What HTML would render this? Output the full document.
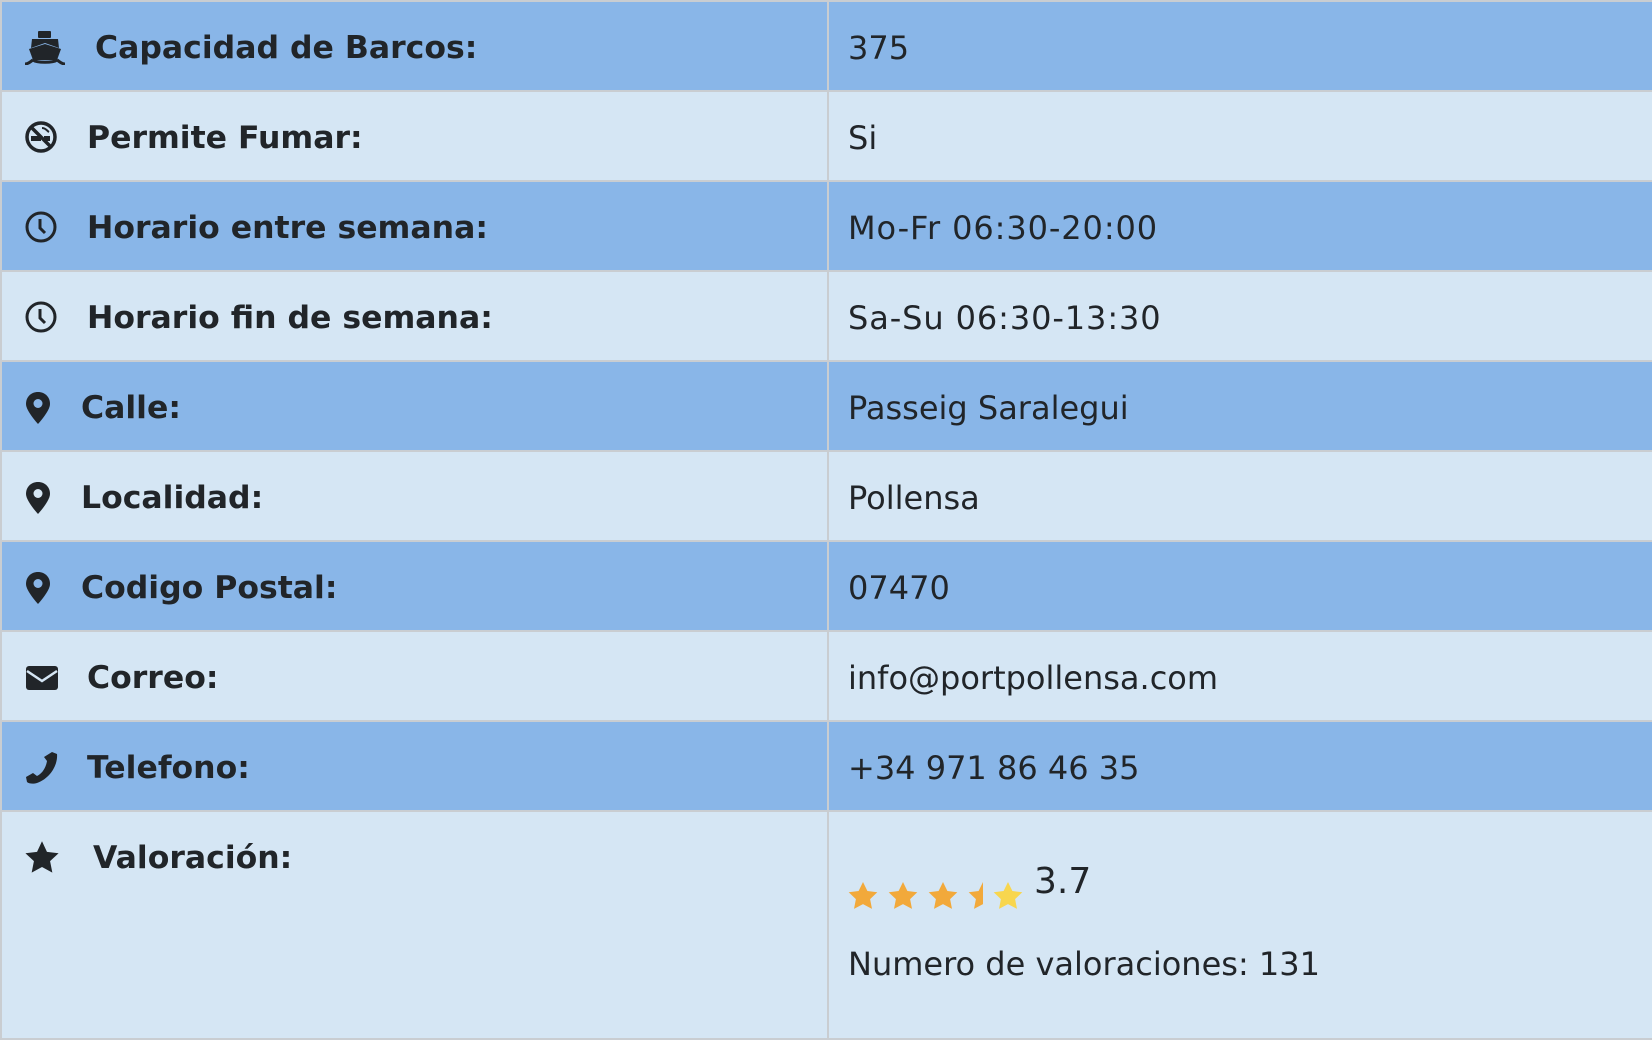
<!DOCTYPE html>
<html><head><meta charset="utf-8"><style>
*{margin:0;padding:0;box-sizing:border-box}
body{width:1652px;height:1044px;background:#fff;position:relative;overflow:hidden;font-family:"DejaVu Sans","Liberation Sans",sans-serif;color:#212529}
.r{position:absolute;left:2px;width:1650px;border-bottom:2px solid #c9cdd1}
.d{background:#89b6e8}.l{background:#d5e6f4}
.v{position:absolute;left:825px;top:0;bottom:0;width:2px;background:#c9cdd1}
.lab{position:absolute;font-weight:bold;font-size:31.5px;line-height:36px;top:28px}
.val{position:absolute;left:846px;font-size:32px;line-height:36px;top:28px}
svg{position:absolute}
</style></head><body>
<div style="position:absolute;left:0;top:0;width:1652px;height:2px;background:#c9cdd1"></div>
<div style="position:absolute;left:0;top:0;width:2px;height:1040px;background:#c9cdd1"></div>
<div style="position:absolute;left:1650px;top:0;width:2px;height:1040px;background:#c9cdd1"></div>

<div class="r d" style="top:2px;height:90px"><div class="v"></div>
<svg style="left:22px;top:29px" width="42" height="34" viewBox="0 0 42 34"><rect x="14" y="0" width="13" height="7" rx="1" fill="#212529"/><path d="M8 8h26l1 9 -14-5 -14 5z" fill="#212529"/><path d="M5 18l16-5 16 5 -4 11h-24z" fill="#212529"/><path d="M1 33c4 0 6-3 8-4M41 33c-4 0-6-3-8-4M9 29c4 3 20 3 24 0" stroke="#212529" stroke-width="3" fill="none"/></svg>
<div class="lab" style="left:93px">Capacidad de Barcos:</div><div class="val">375</div></div>

<div class="r l" style="top:92px;height:90px"><div class="v"></div>
<svg style="left:22px;top:28px" width="34" height="34" viewBox="0 0 34 34"><circle cx="17" cy="17" r="14" stroke="#212529" stroke-width="3.5" fill="none"/><path d="M7 7l20 20" stroke="#212529" stroke-width="3.5"/><rect x="7" y="16" width="10" height="5" fill="#212529"/><rect x="20" y="16" width="6" height="5" fill="#212529"/><path d="M18 8c4 0 5 3 7 4" stroke="#212529" stroke-width="2" fill="none"/></svg>
<div class="lab" style="left:85px">Permite Fumar:</div><div class="val">Si</div></div>

<div class="r d" style="top:182px;height:90px"><div class="v"></div>
<svg style="left:22px;top:28px" width="34" height="34" viewBox="0 0 34 34"><circle cx="17" cy="17" r="14" stroke="#212529" stroke-width="3" fill="none"/><path d="M16 9v9l5 5" stroke="#212529" stroke-width="3" fill="none"/></svg>
<div class="lab" style="left:85px">Horario entre semana:</div><div class="val" style="letter-spacing:0.9px">Mo-Fr 06:30-20:00</div></div>

<div class="r l" style="top:272px;height:90px"><div class="v"></div>
<svg style="left:22px;top:28px" width="34" height="34" viewBox="0 0 34 34"><circle cx="17" cy="17" r="14" stroke="#212529" stroke-width="3" fill="none"/><path d="M16 9v9l5 5" stroke="#212529" stroke-width="3" fill="none"/></svg>
<div class="lab" style="left:85px">Horario fin de semana:</div><div class="val" style="letter-spacing:0.9px">Sa-Su 06:30-13:30</div></div>

<div class="r d" style="top:362px;height:90px"><div class="v"></div>
<svg style="left:24px;top:30px" width="24" height="32" viewBox="0 0 24 32"><path d="M12 0C5 0 0 5 0 12c0 7 12 20 12 20s12-13 12-20C24 5 19 0 12 0z" fill="#212529"/><circle cx="12" cy="11.5" r="4.5" fill="#89b6e8"/></svg>
<div class="lab" style="left:79px">Calle:</div><div class="val">Passeig Saralegui</div></div>

<div class="r l" style="top:452px;height:90px"><div class="v"></div>
<svg style="left:24px;top:30px" width="24" height="32" viewBox="0 0 24 32"><path d="M12 0C5 0 0 5 0 12c0 7 12 20 12 20s12-13 12-20C24 5 19 0 12 0z" fill="#212529"/><circle cx="12" cy="11.5" r="4.5" fill="#d5e6f4"/></svg>
<div class="lab" style="left:79px">Localidad:</div><div class="val">Pollensa</div></div>

<div class="r d" style="top:542px;height:90px"><div class="v"></div>
<svg style="left:24px;top:30px" width="24" height="32" viewBox="0 0 24 32"><path d="M12 0C5 0 0 5 0 12c0 7 12 20 12 20s12-13 12-20C24 5 19 0 12 0z" fill="#212529"/><circle cx="12" cy="11.5" r="4.5" fill="#89b6e8"/></svg>
<div class="lab" style="left:79px">Codigo Postal:</div><div class="val">07470</div></div>

<div class="r l" style="top:632px;height:90px"><div class="v"></div>
<svg style="left:24px;top:34px" width="32" height="24" viewBox="0 0 32 24"><rect x="0" y="0" width="32" height="24" rx="3" fill="#212529"/><path d="M1 5l15 10 15-10" stroke="#d5e6f4" stroke-width="2.5" fill="none"/></svg>
<div class="lab" style="left:85px">Correo:</div><div class="val">info@portpollensa.com</div></div>

<div class="r d" style="top:722px;height:90px"><div class="v"></div>
<svg style="left:24px;top:30px" width="32" height="32" viewBox="0 0 32 32"><path d="M26 0l5 2c1 10-6 24-20 29-3 1-8 1-10-1l-1-5 7-4 4 3c6-3 9-9 10-15l-3-4z" fill="#212529"/></svg>
<div class="lab" style="left:85px">Telefono:</div><div class="val">+34 971 86 46 35</div></div>

<div class="r l" style="top:812px;height:228px"><div class="v"></div>
<svg style="left:23px;top:29px" width="34" height="33" viewBox="0 0 24 23"><path d="M12 0l3.5 7.5 8.2 1-6 5.6 1.6 8.1L12 18.2 4.7 22.2l1.6-8.1-6-5.6 8.2-1z" fill="#212529"/></svg>
<div class="lab" style="left:91px">Valoración:</div>
<svg style="left:846px;top:67px" width="180" height="32" viewBox="0 0 180 32">
<g transform="translate(0,3)"><path d="M15 0l4.4 9 9.9 1.3-7.2 6.8 1.9 9.8L15 22.1 6 26.9l1.9-9.8L.7 10.3 10.6 9z" fill="#f2a93b"/></g>
<g transform="translate(40,3)"><path d="M15 0l4.4 9 9.9 1.3-7.2 6.8 1.9 9.8L15 22.1 6 26.9l1.9-9.8L.7 10.3 10.6 9z" fill="#f2a93b"/></g>
<g transform="translate(80,3)"><path d="M15 0l4.4 9 9.9 1.3-7.2 6.8 1.9 9.8L15 22.1 6 26.9l1.9-9.8L.7 10.3 10.6 9z" fill="#f2a93b"/></g>
<g transform="translate(120,3)"><path d="M15 0v22.1L6 26.9l1.9-9.8L.7 10.3 10.6 9z" fill="#f2a93b"/></g>
<g transform="translate(145,3)"><path d="M15 0l4.4 9 9.9 1.3-7.2 6.8 1.9 9.8L15 22.1 6 26.9l1.9-9.8L.7 10.3 10.6 9z" fill="#f8d64e"/></g>
</svg>
<div class="val" style="left:1032px;top:50px;font-size:36px;line-height:40px">3.7</div>
<div class="val" style="top:134px">Numero de valoraciones: 131</div>
</div>
</body></html>
